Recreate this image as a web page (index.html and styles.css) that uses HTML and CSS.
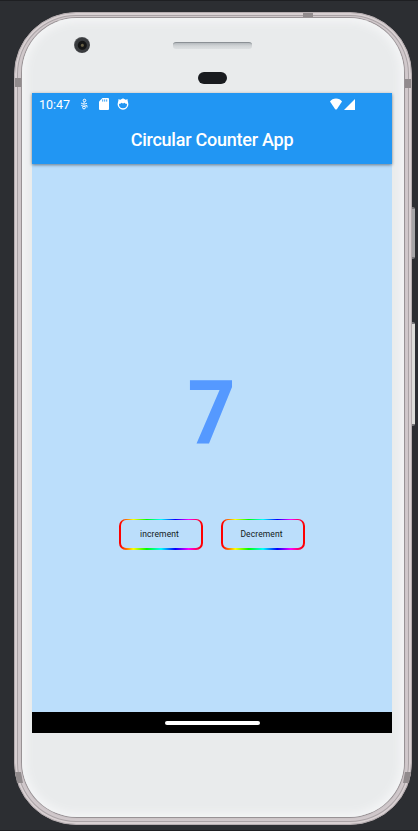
FILE: index.html
```html
<!DOCTYPE html>
<html lang="en">
<head>
<meta charset="utf-8">
<title>Circular Counter App</title>
<link rel="stylesheet" href="styles.css">
</head>
<body>
<div class="phone">
  <i class="key power"></i>
  <i class="key volume"></i>
  <i class="band band-top"></i>
  <i class="band band-left"></i>
  <i class="band band-right"></i>
  <i class="band band-left low"></i>
  <i class="band band-right low"></i>
  <div class="face">
    <i class="camera"></i>
    <i class="speaker"></i>
    <i class="sensor"></i>
    <main class="screen">
      <header class="top">
        <div class="status">
          <span class="time">10:47</span>
          <svg class="usb" viewBox="0 0 8 12" fill="none" stroke="#fff"><circle cx="4.500" cy="2.500" r="1.300"/><path d="M4.300 3.800L3.600 6M1 5l2.600 1.300L7 5.300M1.200 7.300l2.400 1L7 7.500v2" stroke-width=".9"/><circle cx="4" cy="9.500" r="1.400"/></svg>
          <svg class="sd" viewBox="0 0 10 12"><path d="M3.5 0H9q1 0 1 1v10q0 1-1 1H1q-1 0-1-1V3.5z" fill="#fff"/><path d="M3.7 1.400v2.200M5.700 1.400v2.200M7.700 1.400v2.200" stroke="#2196f3" stroke-width=".9"/></svg>
          <svg class="face-icon" viewBox="0 0 12 12"><circle cx="6" cy="6.300" r="4.700" fill="none" stroke="#fff" stroke-width="1.400"/><path d="M1.500 1l2 1L6 .3l2.500 1.700 2-1 .3 4.300L9 6 7.500 4.800 6 5.600 4.500 4.800 3 6 1.200 5.300z" fill="#fff"/></svg>
          <svg class="wifi" viewBox="0 0 12 12"><path d="M0 3.500Q2 .5 6 .5t6 3L7 11q-1 1.200-2 0z" fill="#fff"/></svg>
          <svg class="signal" viewBox="0 0 11 11"><path d="M11 0v11H0z" fill="#fff"/></svg>
        </div>
        <h1>Circular Counter App</h1>
      </header>
      <section class="content">
        <div class="count">7</div>
        <div class="actions">
          <button>increment</button>
          <button>Decrement</button>
        </div>
      </section>
      <footer class="nav"><i></i></footer>
    </main>
  </div>
</div>
</body>
</html>
```
FILE: styles.css
```css
* { box-sizing: border-box; }
body {
  margin: 0;
  height: 831px;
  padding: 12px 0 0 14px;
  overflow: hidden;
  background: #2c2e32;
  border-top: 1px solid #1e1f22;
  border-bottom: 1px solid #1e1f22;
  font-family: Roboto, sans-serif;
}
.phone {
  position: relative;
  width: 398px;
  height: 813px;
  margin-top: -1px;
  padding: 5px 7px 8px;
  border-radius: 62px;
  background: #cdc5c8;
  border: 1px solid #b5adb0;
  box-shadow: inset 0 0 0 2px #d8d0d2, inset 0 0 0 3px #aaa3a6, inset 0 0 0 5px #d0c8cb;
}
.face {
  position: relative;
  width: 382px;
  height: 799px;
  padding: 75px 0 0 10px;
  border-radius: 55px;
  background: #e9ebec;
  box-shadow: 0 0 0 1px #989295, inset 0 0 8px 4px #f4f5f6;
}
.key {
  position: absolute;
  left: 397px;
  width: 3px;
  border-radius: 0 2px 2px 0;
  border-top: 2px solid #77777a;
  border-bottom: 2px solid #77777a;
}
.power { top: 194px; height: 52px; background: #a5a5a7; }
.volume { top: 309px; height: 104px; background: #dcdcd9; }
.band { position: absolute; background: #918b8d; }
.band-top { left: 288px; top: 0; width: 10px; height: 4px; }
.band-left { left: 0; top: 65px; width: 6px; height: 9px; }
.band-right { right: 0; top: 66px; width: 6px; height: 9px; }
.low { top: 759px; height: 11px; }
.band-left.low { left: 1px; transform: skewX(10deg); }
.band-right.low { right: 1px; transform: skewX(-10deg); }
.camera {
  position: absolute;
  left: 52px;
  top: 19px;
  width: 16px;
  height: 16px;
  border-radius: 50%;
  background: radial-gradient(circle at 52% 52%, #675f45 0 1px, #141516 2px 4px, #393b3e 5px 7px, #55575a 8px);
}
.speaker {
  position: absolute;
  left: 151px;
  top: 24px;
  width: 79px;
  height: 7px;
  border-radius: 3px;
  border-top: 1px solid #8b9095;
  background: linear-gradient(#b5babe, #d2d5d7 50%, #dcdfe1);
}
.sensor {
  position: absolute;
  left: 176px;
  top: 54px;
  width: 29px;
  height: 12px;
  border-radius: 6px;
  background: #191b1f;
}
.screen {
  display: flex;
  flex-direction: column;
  width: 360px;
  height: 640px;
  background: #bbdefb;
}
.top {
  height: 71px;
  background: #2196f3;
  box-shadow: 0 1px 3px rgba(0, 0, 0, .45);
  color: #fff;
}
.status {
  display: flex;
  align-items: center;
  height: 22px;
  padding-left: 7px;
}
.time { width: 41px; font-size: 12.500px; line-height: 23px; }
.usb { width: 8px; height: 12px; }
.sd { width: 10px; height: 12px; margin-left: 11px; }
.face-icon { width: 12px; height: 12px; margin-left: 8px; }
.wifi { width: 12px; height: 12px; margin-left: 201px; }
.signal { width: 11px; height: 11px; margin-left: 2px; }
h1 {
  margin: 12px 0 0;
  text-align: center;
  font-size: 18px;
  line-height: 25px;
  font-weight: 500;
  letter-spacing: -.24px;
  white-space: nowrap;
}
.content {
  flex: 1;
  display: flex;
  flex-direction: column;
  align-items: center;
  padding-top: 196px;
}
.count {
  height: 108px;
  font-size: 89px;
  line-height: 108px;
  font-weight: 700;
  color: #5599ff;
  transform: scaleX(.94);
}
.actions { display: flex; gap: 18px; margin-top: 51px; }
button {
  width: 84px;
  height: 31px;
  padding: 0 3px 0 0;
  border: 2px solid transparent;
  border-width: 1px 2px 2px;
  border-radius: 7px;
  background:
    linear-gradient(#bbdefb, #bbdefb) padding-box,
    linear-gradient(90deg, #f00 0 2%, #ff0 17%, #0f0 33%, #0ff 50%, #00f 67%, #f0f 83%, #f00 98%) border-box;
  font: 8.500px/28px Roboto, sans-serif;
  letter-spacing: .1px;
  color: #101820;
}
.nav {
  display: flex;
  align-items: center;
  justify-content: center;
  height: 21px;
  background: #000;
}
.nav i { width: 95px; height: 4px; border-radius: 2px; background: #fff; }
```
